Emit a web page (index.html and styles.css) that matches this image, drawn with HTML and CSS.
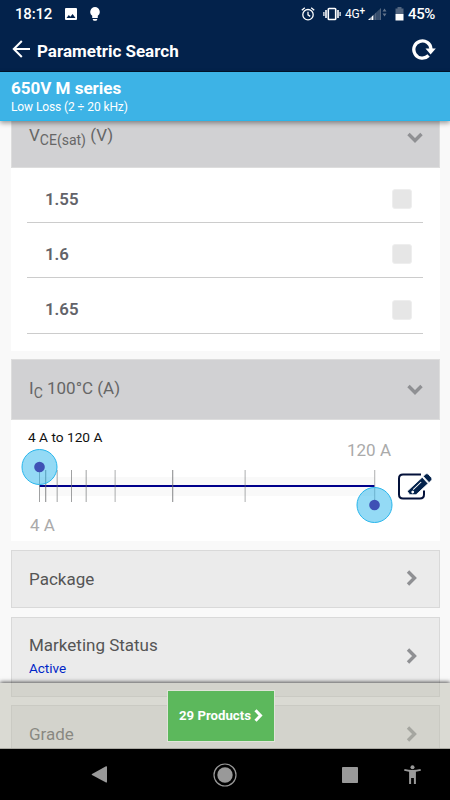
FILE: index.html
```html
<!DOCTYPE html>
<html lang="en">
<head>
<meta charset="utf-8">
<title>Parametric Search</title>
<link rel="stylesheet" href="styles.css">
</head>
<body>
<div class="phone">
  <header class="top">
    <div class="status">
      <span class="clock">18:12</span>
      <svg class="photo" width="12" height="12" viewBox="0 0 12 12"><path fill="#fff" fill-rule="evenodd" d="M1 0h10q1 0 1 1v10q0 1-1 1H1q-1 0-1-1V1q0-1 1-1zM1.5 10h9L7.6 6 5.4 8.8 3.8 7z"/></svg>
      <svg class="bulb" width="10" height="14" viewBox="0 0 10 14"><path fill="#fff" d="M5 0a4.9 4.9 0 0 1 2.8 8.8V11H2.2V8.800A4.900 4.900 0 0 1 5 0zM2.800 12h4.400v.8L6.300 13.700H3.700L2.800 12.800z"/></svg>
      <span class="spacer"></span>
      <svg class="alarm" width="14" height="14" viewBox="0 0 14 14" fill="none" stroke="#fff" stroke-width="1.300"><circle cx="7" cy="7.700" r="5.200"/><path d="M7 4.700v3.200l2.200 1.500M.8 3.300 3.800.8M13.200 3.300 10.200.8"/></svg>
      <svg class="vibrate" width="18" height="14" viewBox="0 0 18 14" fill="none" stroke="#fff" stroke-width="1.600"><rect x="5.300" y="1.500" width="7.400" height="11" rx=".8"/><path d="M3 3v8M15 3v8" /><path stroke-width="1.200" d="M.9 5v4M17.100 5v4"/></svg>
      <span class="net">4G<span class="plus">+</span></span>
      <svg class="signal" width="19" height="14" viewBox="0 0 19 14"><path fill="#52657f" d="M0 13 13 1v12z"/><path fill="#fff" d="M0 13 5.500 8v5z"/><path stroke="#03224b" stroke-width=".7" d="M3 5v8M6 3v10M9 1v12M11 0v13"/><path fill="#65758c" d="M14.500 4.500 16.500 1.500l2 3zM14.500 6.500h4l-2 3z"/></svg>
      <svg class="battery" width="9" height="14" viewBox="0 0 9 14"><path fill="#52657f" d="M2.500 0h4v1.500H8.500V7h-8V1.500h2z"/><path fill="#fff" d="M.5 7h8v6.500h-8z"/></svg>
      <span class="pct">45%</span>
    </div>
    <div class="appbar">
      <svg class="back" width="19" height="18" viewBox="0 0 19 18" fill="none" stroke="#fff" stroke-width="2"><path d="M18 9H1.800M9.800 1 1.800 9l8 8"/></svg>
      <h1>Parametric Search</h1>
      <svg class="reload" width="24" height="22" viewBox="0 0 24 22"><path fill="none" stroke="#fff" stroke-width="3.300" d="M16.600 17.500A8.600 8.600 0 1 1 19 11"/><path fill="#fff" d="M13.500 10.500h10.300L18.600 16.500z"/></svg>
    </div>
  </header>
  <section class="series">
    <h2>650V M series</h2>
    <p>Low Loss (2 ÷ 20 kHz)</p>
  </section>
  <main class="content">
    <div class="list">
      <section class="group voltage">
        <div class="head"><span class="vce">V<sub>CE(sat)</sub> (V)</span><svg class="down" width="16" height="11" viewBox="0 0 16 11"><path d="m1.500 2 6.500 6.500L14.500 2"/></svg></div>
        <div class="options">
          <label class="option"><span>1.55</span><i></i></label>
          <label class="option"><span>1.6</span><i></i></label>
          <label class="option"><span>1.65</span><i></i></label>
        </div>
      </section>
      <section class="group current">
        <div class="head"><span class="ic">I<sub>C</sub> 100°C (A)</span><svg class="down" width="16" height="11" viewBox="0 0 16 11"><path d="m1.500 2 6.500 6.500L14.500 2"/></svg></div>
        <div class="range">
          <div class="range-text">4 A to 120 A</div>
          <div class="max">120 A</div>
          <div class="slider">
            <svg class="track" width="376" height="76" viewBox="0 0 376 76">
              <path fill="#f9f9f9" d="M18.500 29h335v19h-335z"/>
              <path fill="#00008b" d="M18.500 37h335v2h-335z"/>
              <g fill="#6e7072" fill-opacity=".65"><path d="M18 22h1v32h-1zM24 22h1.300v32H24zM50 22h1v32h-1zM151 22h1.300v32H151z"/><path fill-opacity=".43" d="M35.500 22h1.500v32h-1.500zM64.500 22h1.500v32h-1.500zM93.500 22h1.300v32h-1.300zM223.500 22h1.300v32h-1.300zM353 22h1.300v32H353z"/></g>
              <g fill="#29b6ec" fill-opacity=".5" stroke="#29b6ec"><circle cx="18.500" cy="19" r="17.500"/><circle cx="353.500" cy="57" r="17.500"/></g>
              <g fill="#3f51b5"><circle cx="18.500" cy="19" r="5.300"/><circle cx="353.500" cy="57" r="5.300"/></g>
            </svg>
            <svg class="edit" width="36" height="30" viewBox="0 0 36 30"><path fill="none" stroke="#03113a" stroke-width="2" d="M24 2.500H6Q2 2.500 2 6.500v16q0 4 4 4h17q4 0 4-4v-4"/><g transform="translate(12.800 22.700) rotate(-43)"><path fill="#03224b" stroke="#fff" stroke-width=".8" d="M0 0 .5-4.300H21v8.600H4.500zM22.300-4.300h3q2.200 0 2.200 2v4.600q0 2-2.200 2h-3z"/><path stroke="#fff" stroke-width="1" d="M6-1.500h11"/><circle cx="4" cy="0" r="1.400" fill="#fff"/></g></svg>
          </div>
          <div class="min">4 A</div>
        </div>
      </section>
      <section class="item package"><span>Package</span><svg class="right" width="11" height="16" viewBox="0 0 11 16"><path d="m2 1.500 6.500 6.500L2 14.500"/></svg></section>
      <section class="item marketing"><div><span>Marketing Status</span><small>Active</small></div><svg class="right" width="11" height="16" viewBox="0 0 11 16"><path d="m2 1.500 6.500 6.500L2 14.500"/></svg></section>
      <section class="item grade"><span>Grade</span><svg class="right" width="11" height="16" viewBox="0 0 11 16"><path d="m2 1.500 6.500 6.500L2 14.500"/></svg></section>
    </div>
    <footer class="results"><button><span>29 Products</span><svg width="9" height="13" viewBox="0 0 9 13"><path fill="none" stroke="#fff" stroke-width="3" d="m1.500 1.300 5 5.200-5 5.200"/></svg></button></footer>
  </main>
  <nav class="system">
    <svg width="450" height="51" viewBox="0 0 450 51"><g fill="#999"><path d="M92 25 106 17.300q1-.4 1 .8v14.600q0 1.200-1 .7L92 26q-.8-.5 0-1z"/><circle cx="225" cy="26" r="7.700"/><rect x="342" y="18" width="16" height="16" rx=".8"/><circle cx="412.500" cy="18.300" r="2"/><path d="M404.500 20q8 2 16 0l.4 1.700q-2.500.7-5 1V35h-2v-6h-2.800v6h-2V22.700q-2.500-.3-5-1z"/></g><circle cx="225" cy="26" r="11" fill="none" stroke="#999" stroke-width="1.200"/></svg>
  </nav>
</div>
</body>
</html>
```
FILE: styles.css
```css
* { box-sizing: border-box; }
body { margin: 0; font-family: Roboto, "Liberation Sans", sans-serif; }
h1, h2, p { margin: 0; }
svg { display: block; flex-shrink: 0; }
.phone { display: flex; flex-direction: column; width: 450px; height: 800px; overflow: hidden; background: #f9f9f9; }
.top { height: 72px; background: #03224b; border-bottom: 1px solid #02142b; color: #fff; }
.status { display: flex; align-items: center; height: 27px; padding: 0 14px 0 15px; white-space: nowrap; }
.clock { width: 50px; font-size: 15px; font-weight: 500; letter-spacing: -.2px; }
.bulb { margin-left: 13px; }
.spacer { flex: 1; }
.vibrate { margin-left: 8px; }
.net { display: flex; width: 21px; margin-left: 4px; font-size: 12px; line-height: 14px; letter-spacing: -.2px; }
.plus { margin-top: -3px; font-size: 10px; font-weight: 500; }
.signal { margin-left: 2px; }
.battery { margin: 0 4px 0 8px; }
.pct { width: 28px; font-size: 15px; font-weight: 500; letter-spacing: -.4px; }
.appbar { display: flex; align-items: center; height: 44px; padding: 0 14px 0 12px; }
.appbar h1 { flex: 1; margin-left: 6px; padding-top: 3px; font-size: 17px; line-height: 20px; font-weight: 700; white-space: nowrap; }
.series { z-index: 2; height: 49px; padding: 6px 11px; background: #3db3e6; border-bottom: 1px solid #29b6ec; box-shadow: 0 2px 5px rgba(0, 0, 0, .4); color: #fff; }
.series h2 { font-size: 17px; line-height: 20px; font-weight: 700; }
.series p { margin-top: 2px; font-size: 12px; line-height: 14px; letter-spacing: -.1px; }
.content { position: relative; height: 628px; overflow: hidden; }
.list { display: flex; flex-direction: column; margin: -14px 10px 0 11px; }
.head { display: flex; align-items: center; justify-content: space-between; height: 61px; padding: 0 16px 0 17px; background: #d1d1d3; border: 1px solid #ddd; color: #666; font-size: 17px; }
.head > span { line-height: 20px; white-space: nowrap; }
.head sub { font-size: 14px; line-height: 0; vertical-align: -3.5px; }
.vce { margin-top: -5px; }
.ic { margin-top: -4px; }
.down path, .right path { fill: none; stroke: #8f9093; stroke-width: 3.400; }
.options { height: 183px; padding: 0 17px 0 16px; background: #fff; }
.option { display: flex; align-items: center; justify-content: space-between; height: 55.400px; padding: 8px 11px 0 18px; border-bottom: 1px solid #ccc; color: #636369; font-size: 16.800px; font-weight: 600; }
.option:first-child { height: 55px; }
.option span { margin-top: -1px; }
.option i { width: 20px; height: 20px; background: #e6e6e6; border: 1px solid #eee; border-radius: 3px; }
.current { margin-top: 8px; }
.range { display: flex; flex-direction: column; height: 121px; padding-left: 10px; background: #fff; }
.range-text { height: 21px; padding: 9px 0 0 7px; color: #111; font-size: 13.700px; line-height: 16px; white-space: nowrap; }
.max { height: 7px; padding: 0 49px 0 0; text-align: right; color: #aaa; font-size: 17px; line-height: 18px; }
.slider { display: flex; height: 76px; }
.edit { margin: 24px 0 0; }
.min { margin-top: -9px; padding-left: 9px; color: #aaa; font-size: 17px; line-height: 20px; }
.item { display: flex; align-items: center; justify-content: space-between; padding: 0 22px 0 17px; background: #ebebeb; border: 1px solid #d9d9d9; color: #555; font-size: 17px; line-height: 18px; }
.item span { display: block; margin-top: -1px; }
.item small { display: block; margin-top: 5px; color: #0026c7; font-size: 13.500px; line-height: 18px; }
.package { height: 58px; margin-top: 9px; padding-bottom: 2px; }
.package span { margin-top: 1px; }
.marketing { height: 80px; margin-top: 9px; padding-bottom: 3px; }
.marketing div { padding-top: 3px; }
.grade { height: 58px; margin-top: 8px; }
.results { position: absolute; right: 0; bottom: 0; left: 0; display: flex; justify-content: center; height: 66px; padding-top: 7px; background: rgba(188, 187, 173, .5); border-bottom: 1px solid #aaa9a2; box-shadow: 0 -1px 4px rgba(0, 0, 0, .65); }
.results button { display: flex; align-items: center; justify-content: center; gap: 3px; width: 108px; height: 52px; margin-left: -8px; padding: 0 0 2px; background: #5cb85c; background-clip: padding-box; border: 1px solid #e1e4da; color: #fff; font-family: inherit; font-size: 13.200px; font-weight: 700; white-space: nowrap; }
.system { height: 51px; background: #000; }
```
